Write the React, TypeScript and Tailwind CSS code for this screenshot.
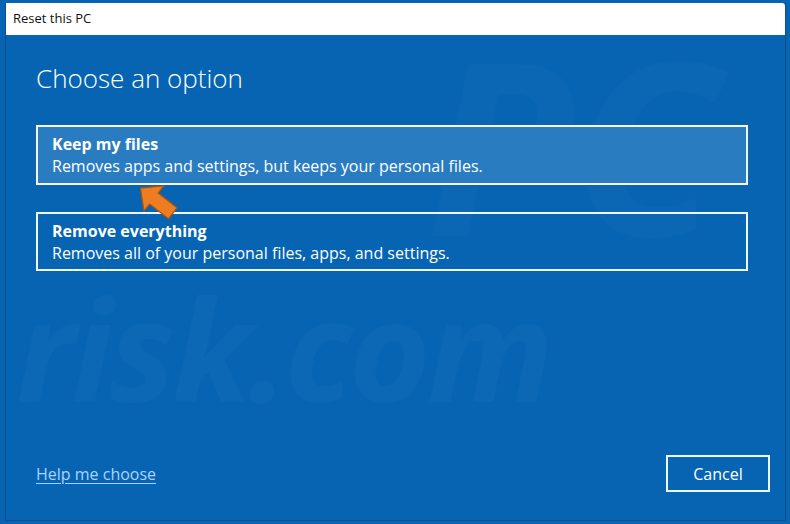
import React from "react";

const font = { fontFamily: '"Open Sans", "Noto Sans", sans-serif' };

function Arrow() {
  return (
    <svg width="50" height="44" viewBox="0 0 50 44" className="absolute left-[126px] top-[176px]">
      <g transform="rotate(38 25 22)">
        <path
          d="M4 22 L21 6 L21 15 L45 15 L45 29 L21 29 L21 38 Z"
          fill="#ee7d22"
          stroke="#a9540f"
          strokeWidth="1.2"
          strokeLinejoin="round"
        />
      </g>
    </svg>
  );
}

export default function App() {
  return (
    <div className="w-[790px] h-[524px] bg-[#0664b2] pt-[3px] pl-[5px] pr-[4px] pb-[3px] overflow-hidden" style={font}>
      <div className="relative w-full h-full flex flex-col bg-[#0664b2] border-x border-b border-[#0a4f8c]">
        <div className="h-[32px] bg-white flex items-center pl-[7px] text-[13px] text-[#111] rounded-tr-[3px]">
          Reset this PC
        </div>
        <div className="pointer-events-none absolute inset-0 overflow-hidden select-none">
          <div className="absolute left-[10px] top-[275px] text-[140px] font-bold italic text-white opacity-[0.025] leading-none tracking-tight">
            risk.com
          </div>
          <div className="absolute left-[420px] top-[20px] text-[240px] font-bold italic text-white opacity-[0.02] leading-none">
            PC
          </div>
        </div>
        <div className="relative flex-1 flex flex-col pl-[30px] pr-[15px] text-white">
          <h1 className="mt-[25px] text-[26px] font-light leading-[36px] text-white">Choose an option</h1>
          <div className="mt-[29px] flex flex-col gap-[27px] w-[712px]">
            <div className="h-[60px] border-2 border-[#eef6ff] bg-[#2a7cc1] outline outline-1 outline-[#1d5f9a] pl-[14px] flex flex-col justify-center">
              <div className="text-[16px] font-bold leading-[22px]">Keep my files</div>
              <div className="text-[16px] leading-[22px]">Removes apps and settings, but keeps your personal files.</div>
            </div>
            <div className="h-[59px] border-2 border-[#eef6ff] pl-[14px] flex flex-col justify-center">
              <div className="text-[16px] font-bold leading-[22px]">Remove everything</div>
              <div className="text-[16px] leading-[22px]">Removes all of your personal files, apps, and settings.</div>
            </div>
          </div>
          <div className="mt-auto mb-[28px] flex items-center justify-between">
            <a className="text-[16px] text-[#a9d4ff] underline underline-offset-[3px] cursor-pointer">Help me choose</a>
            <button className="w-[104px] h-[37px] border-2 border-[#eef6ff] text-[16px] text-white">Cancel</button>
          </div>
        </div>
        <Arrow />
      </div>
    </div>
  );
}
